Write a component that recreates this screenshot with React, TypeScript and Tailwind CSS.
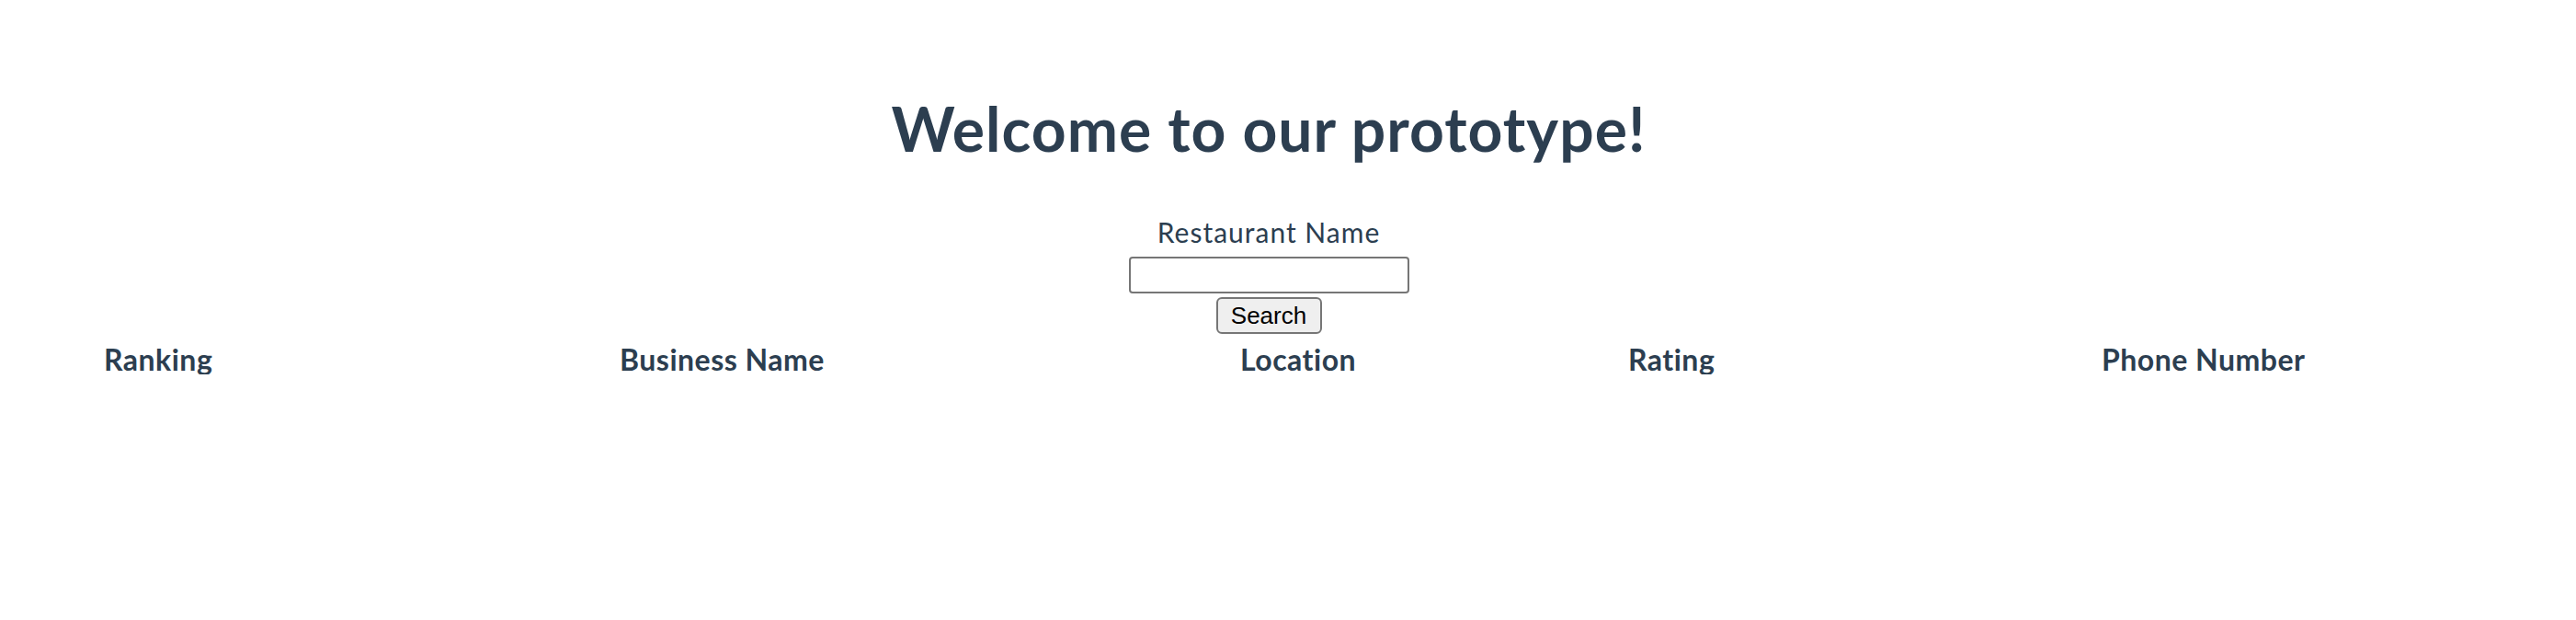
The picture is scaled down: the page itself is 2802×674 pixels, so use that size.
import React from 'react';

const columns = ['Ranking', 'Business Name', 'Location', 'Rating', 'Phone Number'];

const App: React.FC = () => {
  return (
    <div className="w-[2760px] text-center text-[#2c3e50] font-['Lato',sans-serif]">
      <h1 className="mt-[107px] text-[66px] leading-[66px] font-bold tracking-[1px]">Welcome to our prototype!</h1>
      <div className="mt-[64px] flex flex-col items-center">
        <label className="text-[30px] leading-[30px] tracking-[1px]">Restaurant Name</label>
        <input
          type="text"
          className="mt-[12px] w-[305px] h-[40px] border-2 border-[#767676] rounded-[4px] bg-white outline-none"
        />
        <button
          type="button"
          className="mt-[4px] w-[115px] h-[40px] border-2 border-[#767676] rounded-[6px] bg-[#efefef] text-black text-[26px] leading-none font-['Liberation_Sans',Arial,sans-serif]"
        >
          Search
        </button>
      </div>
      <div className="mt-[12px] pl-[113px] grid grid-cols-[561px_675px_422px_515px_1fr] text-left text-[32px] leading-[32px] font-bold tracking-[0.5px]">
        {columns.map((c) => (
          <div key={c}>{c}</div>
        ))}
      </div>
    </div>
  );
};

export default App;
